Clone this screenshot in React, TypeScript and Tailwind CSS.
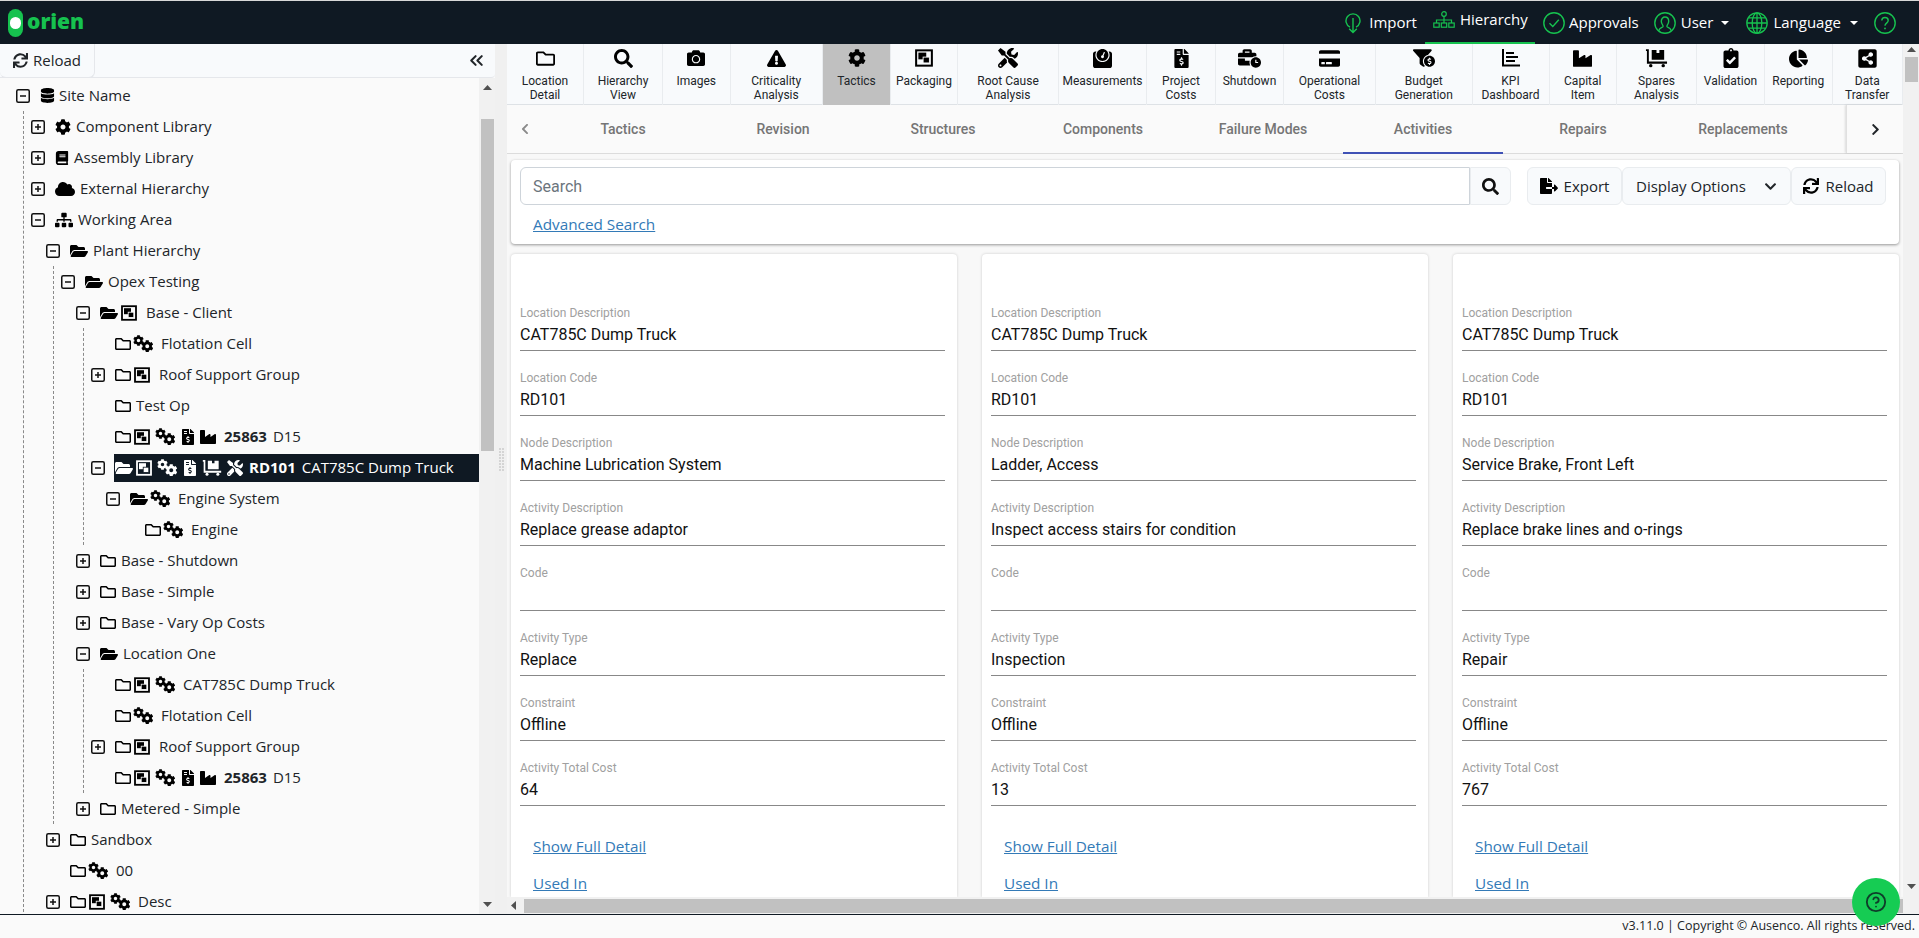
import React from "react";
import {
  FaDatabase, FaCog, FaBook, FaCloud, FaSitemap, FaRegFolder, FaFolderOpen, FaFileInvoiceDollar, FaIndustry, FaTools,
  FaSync, FaSearch, FaCamera, FaExclamationTriangle, FaWeight, FaBusinessTime, FaCreditCard,
  FaFunnelDollar, FaClipboardCheck, FaChartPie, FaShareAltSquare, FaFileExport, FaChevronDown, FaChevronLeft, FaChevronRight,
} from "react-icons/fa";
import { ChevronsLeft, CircleHelp } from "lucide-react";

const SANS = "font-['Open_Sans','Noto_Sans',sans-serif]";
const ROBOTO = "font-['Roboto',sans-serif]";

function ImgIcon({ size = 16, bg = "#fafafa" }: { size?: number; bg?: string }) {
  return (
    <svg width={size} height={size} viewBox="0 0 16 16" className="shrink-0">
      <rect x="1" y="1.2" width="14" height="13.6" fill="none" stroke="currentColor" strokeWidth="1.8" />
      <rect x="3" y="3.2" width="7" height="6" fill="currentColor" />
      <rect x="7.2" y="7.2" width="5.6" height="5.2" fill="currentColor" stroke={bg} strokeWidth="0.8" />
    </svg>
  );
}

function Cogs() {
  return (
    <span className="relative block w-[20px] h-[15px] -ml-px shrink-0">
      <FaCog size={11} className="absolute left-0 -top-px" />
      <FaCog size={12.5} className="absolute left-[7.5px] top-[3.5px]" />
    </span>
  );
}

function Cart({ size = 20 }: { size?: number }) {
  return (
    <svg width={size} height={size * 0.85} viewBox="0 0 24 20" className="shrink-0" fill="currentColor">
      <path d="M1 1h3v13h19v2.2H2V3H1z" />
      <path d="M7 2h5v3h3V2h5v10H7z" />
      <circle cx="6" cy="18.2" r="1.8" />
      <circle cx="19" cy="18.2" r="1.8" />
    </svg>
  );
}

const ICONS: Record<string, { el: (bg: string) => React.ReactNode; gap: string; end: string }> = {
  db: { el: () => <FaDatabase size={15} />, gap: "", end: "mr-[4px]" },
  cog: { el: () => <FaCog size={16} />, gap: "", end: "mr-[5px]" },
  book: { el: () => <FaBook size={14} />, gap: "", end: "mr-[5px]" },
  cloud: { el: () => <FaCloud size={20} />, gap: "", end: "mr-[5px]" },
  site: { el: () => <FaSitemap size={18} />, gap: "", end: "mr-[5px]" },
  F: { el: () => <FaRegFolder size={16} />, gap: "mr-[3px]", end: "mr-[5px]" },
  O: { el: () => <FaFolderOpen size={18} />, gap: "mr-[3px]", end: "mr-[5px]" },
  I: { el: (bg) => <ImgIcon bg={bg} />, gap: "mr-[6px]", end: "mr-[9px]" },
  C: { el: () => <Cogs />, gap: "mr-[5px]", end: "mr-[8px]" },
  D: { el: () => <FaFileInvoiceDollar size={16} />, gap: "mr-[4px]", end: "mr-[8px]" },
  M: { el: () => <FaIndustry size={16} />, gap: "mr-[5px]", end: "mr-[8px]" },
  K: { el: () => <Cart />, gap: "mr-[5px]", end: "mr-[8px]" },
  T: { el: () => <FaTools size={16} />, gap: "mr-[5px]", end: "mr-[6px]" },
};

type Node = {
  label: string;
  bold?: string;
  icons: string[];
  exp?: "plus" | "minus";
  line?: boolean;
  selected?: boolean;
  kids?: Node[];
};

const tree: Node = {
  label: "Site Name", icons: ["db"], exp: "minus", line: true, kids: [
    { label: "Component Library", icons: ["cog"], exp: "plus" },
    { label: "Assembly Library", icons: ["book"], exp: "plus" },
    { label: "External Hierarchy", icons: ["cloud"], exp: "plus" },
    {
      label: "Working Area", icons: ["site"], exp: "minus", kids: [
        {
          label: "Plant Hierarchy", icons: ["O"], exp: "minus", line: true, kids: [
            {
              label: "Opex Testing", icons: ["O"], exp: "minus", kids: [
                {
                  label: "Base - Client", icons: ["O", "I"], exp: "minus", line: true, kids: [
                    { label: "Flotation Cell", icons: ["F", "C"] },
                    { label: "Roof Support Group", icons: ["F", "I"], exp: "plus" },
                    { label: "Test Op", icons: ["F"] },
                    { label: "D15", bold: "25863", icons: ["F", "I", "C", "D", "M"] },
                    {
                      label: "CAT785C Dump Truck", bold: "RD101", selected: true, icons: ["O", "I", "C", "D", "K", "T"], exp: "minus", kids: [
                        {
                          label: "Engine System", icons: ["O", "C"], exp: "minus", kids: [
                            { label: "Engine", icons: ["F", "C"] },
                          ],
                        },
                      ],
                    },
                  ],
                },
                { label: "Base - Shutdown", icons: ["F"], exp: "plus" },
                { label: "Base - Simple", icons: ["F"], exp: "plus" },
                { label: "Base - Vary Op Costs", icons: ["F"], exp: "plus" },
                {
                  label: "Location One", icons: ["O"], exp: "minus", line: true, kids: [
                    { label: "CAT785C Dump Truck", icons: ["F", "I", "C"] },
                    { label: "Flotation Cell", icons: ["F", "C"] },
                    { label: "Roof Support Group", icons: ["F", "I"], exp: "plus" },
                    { label: "D15", bold: "25863", icons: ["F", "I", "C", "D", "M"] },
                  ],
                },
                { label: "Metered - Simple", icons: ["F"], exp: "plus" },
              ],
            },
          ],
        },
        { label: "Sandbox", icons: ["F"], exp: "plus" },
        { label: "00", icons: ["F", "C"] },
        { label: "Desc", icons: ["F", "I", "C"], exp: "plus" },
      ],
    },
  ],
};

function Expander({ kind }: { kind?: "plus" | "minus" }) {
  return (
    <span className="block w-[14px] h-[14px] shrink-0">
      {kind && (
        <svg width="14" height="14" viewBox="0 0 14 14" className="block">
          <rect x="0.75" y="0.75" width="12.5" height="12.5" rx="1.5" fill="none" stroke="#111" strokeWidth="1.5" />
          <path d="M4 7h6" stroke="#111" strokeWidth="1.5" />
          {kind === "plus" && <path d="M7 4v6" stroke="#111" strokeWidth="1.5" />}
        </svg>
      )}
    </span>
  );
}

function TreeRow({ n }: { n: Node }) {
  const bg = n.selected ? "#0f1923" : "#fafafa";
  return (
    <li>
      <div className="flex items-center h-[31px]">
        <Expander kind={n.exp} />
        <div className={`ml-[9px] pl-px flex-1 h-[28px] flex items-center whitespace-nowrap ${n.selected ? "bg-[#0f1923] text-white" : "text-[#212529]"}`}>
          {n.icons.map((k, i) => (
            <span key={i} className={`flex items-center ${i === n.icons.length - 1 ? ICONS[k].end : ICONS[k].gap} ${n.selected ? "text-white" : "text-black"}`}>
              {ICONS[k].el(bg)}
            </span>
          ))}
          {n.bold && <b className="font-bold mr-[6px]">{n.bold}</b>}
          <span>{n.label}</span>
        </div>
      </div>
      {n.kids && (
        <ul className={n.line ? "ml-[7px] pl-[7px] border-l border-dashed border-[#8a8a8a]" : "pl-[15px]"}>
          {n.kids.map((k, i) => <TreeRow key={i} n={k} />)}
        </ul>
      )}
    </li>
  );
}

function Arrow({ dir, className = "" }: { dir: "up" | "down" | "left"; className?: string }) {
  const d = dir === "up" ? "M0 5L4.5 0L9 5z" : dir === "down" ? "M0 0L4.5 5L9 0z" : "M5 0V9L0 4.5z";
  const w = dir === "left" ? 5 : 9;
  const h = dir === "left" ? 9 : 5;
  return (
    <svg width={w} height={h} viewBox={`0 0 ${w} ${h}`} className={className}>
      <path d={d} fill="#505050" />
    </svg>
  );
}

const green = "#16c24f";

function ImportIcon() {
  return (
    <svg width="16" height="22" viewBox="0 0 16 22" fill="none" stroke={green} strokeWidth="1.4" className="shrink-0">
      <path d="M5 15.2A7 7 0 1 1 11 15.2" />
      <path d="M8 6V20.5M4.2 16.8L8 20.6L11.8 16.8" />
    </svg>
  );
}
function HierIcon() {
  return (
    <svg width="22" height="17" viewBox="0 0 22 17" fill="none" stroke={green} strokeWidth="1.2" className="shrink-0">
      <circle cx="11" cy="3" r="2.3" />
      <path d="M11 5.3V9M3.5 12V9H18.5V12M11 9V12" />
      <rect x="0.8" y="12" width="5.4" height="4.2" />
      <rect x="8.3" y="12" width="5.4" height="4.2" />
      <rect x="15.8" y="12" width="5.4" height="4.2" />
    </svg>
  );
}
function CheckIcon() {
  return (
    <svg width="22" height="22" viewBox="0 0 22 22" fill="none" stroke={green} strokeWidth="1.4" className="shrink-0">
      <circle cx="11" cy="11" r="10.2" />
      <path d="M6.5 11.2L9.8 14.5L15.8 7.8" />
    </svg>
  );
}
function UserIcon() {
  return (
    <svg width="22" height="22" viewBox="0 0 22 22" fill="none" stroke={green} strokeWidth="1.4" className="shrink-0">
      <circle cx="11" cy="11" r="10.2" />
      <path d="M4.8 18.6c.5-2.6 2.4-2.6 3.9-3.6.6-.5.4-1.3 0-1.9-.9-1.1-1.4-2.4-1.4-3.8C7.3 6.7 8.9 5 11 5s3.7 1.7 3.7 4.3c0 1.4-.5 2.7-1.4 3.8-.4.6-.6 1.4 0 1.9 1.5 1 3.4 1 3.9 3.6" />
    </svg>
  );
}
function GlobeIcon() {
  return (
    <svg width="22" height="22" viewBox="0 0 22 22" fill="none" stroke={green} strokeWidth="1.3" className="shrink-0">
      <circle cx="11" cy="11" r="10.2" />
      <ellipse cx="11" cy="11" rx="4.8" ry="10.2" />
      <path d="M11 .8V21.2M1 11H21M2.6 5.8H19.4M2.6 16.2H19.4" />
    </svg>
  );
}
function HelpIcon() {
  return (
    <svg width="22" height="22" viewBox="0 0 22 22" fill="none" stroke={green} strokeWidth="1.4" className="shrink-0">
      <circle cx="11" cy="11" r="10.2" />
      <path d="M7.8 8.6C7.8 6.7 9.2 5.5 11 5.5s3.2 1.2 3.2 3c0 2.6-3.2 2.6-3.2 5.2" />
      <circle cx="11" cy="16.4" r="0.9" fill={green} stroke="none" />
    </svg>
  );
}
function Caret() {
  return <svg width="8" height="4" viewBox="0 0 8 4" className="shrink-0"><path d="M0 0h8L4 4z" fill="#fff" /></svg>;
}

function KpiIcon() {
  return (
    <svg width="18" height="18" viewBox="0 0 18 18" fill="currentColor">
      <path d="M0 0h2v15.5h16v2H0z" />
      <path d="M4 3h8v2H4zM4 7h12v2H4zM4 11h9v2H4z" />
    </svg>
  );
}

const tools: { w: string; icon: React.ReactNode; lines: string[]; active?: boolean }[] = [
  { w: "w-[77px]", icon: <FaRegFolder size={19} />, lines: ["Location", "Detail"] },
  { w: "w-[79px]", icon: <FaSearch size={19} />, lines: ["Hierarchy", "View"] },
  { w: "w-[67.5px]", icon: <FaCamera size={18} />, lines: ["Images"] },
  { w: "w-[92.5px]", icon: <FaExclamationTriangle size={19} />, lines: ["Criticality", "Analysis"] },
  { w: "w-[68px]", icon: <FaCog size={18} />, lines: ["Tactics"], active: true },
  { w: "w-[67px]", icon: <ImgIcon size={18} bg="#f8fafc" />, lines: ["Packaging"] },
  { w: "w-[101px]", icon: <FaTools size={20} />, lines: ["Root Cause", "Analysis"] },
  { w: "w-[88px]", icon: <FaWeight size={19} />, lines: ["Measurements"] },
  { w: "w-[69px]", icon: <FaFileInvoiceDollar size={19} />, lines: ["Project", "Costs"] },
  { w: "w-[68px]", icon: <FaBusinessTime size={23} />, lines: ["Shutdown"] },
  { w: "w-[92px]", icon: <FaCreditCard size={21} />, lines: ["Operational", "Costs"] },
  { w: "w-[96.5px]", icon: <FaFunnelDollar size={22} />, lines: ["Budget", "Generation"] },
  { w: "w-[77px]", icon: <KpiIcon />, lines: ["KPI", "Dashboard"] },
  { w: "w-[67.5px]", icon: <FaIndustry size={19} />, lines: ["Capital", "Item"] },
  { w: "w-[80px]", icon: <Cart size={23} />, lines: ["Spares", "Analysis"] },
  { w: "w-[68px]", icon: <FaClipboardCheck size={20} />, lines: ["Validation"] },
  { w: "w-[67.5px]", icon: <FaChartPie size={19} />, lines: ["Reporting"] },
  { w: "w-[70.5px]", icon: <FaShareAltSquare size={21} />, lines: ["Data", "Transfer"] },
];

const tabs = ["Tactics", "Revision", "Structures", "Components", "Failure Modes", "Activities", "Repairs", "Replacements"];

const LABELS = ["Location Description", "Location Code", "Node Description", "Activity Description", "Code", "Activity Type", "Constraint", "Activity Total Cost"];
const cards = [
  ["CAT785C Dump Truck", "RD101", "Machine Lubrication System", "Replace grease adaptor", "", "Replace", "Offline", "64"],
  ["CAT785C Dump Truck", "RD101", "Ladder, Access", "Inspect access stairs for condition", "", "Inspection", "Offline", "13"],
  ["CAT785C Dump Truck", "RD101", "Service Brake, Front Left", "Replace brake lines and o-rings", "", "Repair", "Offline", "767"],
];

export default function App() {
  return (
    <div className={`w-[1919px] h-[938px] overflow-hidden relative flex flex-col bg-[#fafafa] ${SANS} text-[15px] text-[#212529]`}>
      {/* header */}
      <header className="h-[44px] shrink-0 bg-[#0f1923] border-t border-[#d8d8d8] flex items-stretch text-white">
        <div className="flex items-center pl-[8px]">
          <span className="w-[15px] h-[28px] rounded-[7.5px] bg-[#16c24f] flex items-center justify-center">
            <span className="w-[11px] h-[12px] rounded-full bg-white" />
          </span>
          <span className="ml-[4px] text-[21px] font-extrabold leading-none text-[#16c24f] mb-[3px]">orien</span>
        </div>
        <nav className="ml-auto flex items-stretch pr-[23px]">
          <div className="flex items-center gap-[8px] mr-[8px]"><ImportIcon /><span>Import</span></div>
          <div className="w-[110px] flex items-center pl-[8px] gap-[5px] border-b-[3px] border-[#16c24f] pb-[4px] -mb-px"><HierIcon /><span>Hierarchy</span></div>
          <div className="flex items-center gap-[4px] ml-[8px]"><CheckIcon /><span>Approvals</span></div>
          <div className="flex items-center gap-[5px] ml-[15px]"><UserIcon /><span>User</span><span className="ml-[3px]"><Caret /></span></div>
          <div className="flex items-center gap-[5px] ml-[17px]">
            <GlobeIcon />
            <span>Language</span><span className="ml-[4px]"><Caret /></span>
          </div>
          <div className="flex items-center ml-[16px]"><HelpIcon /></div>
        </nav>
      </header>

      <div className="flex flex-1 min-h-0">
        {/* left */}
        <aside className="w-[495px] shrink-0 flex flex-col bg-[#fafafa]">
          <div className="h-[34px] shrink-0 flex items-stretch bg-[#f8fafc] border-b border-[#e5e7eb] rounded-br-[4px]">
            <div className="w-[95px] flex items-center gap-[5px] pl-[13px] border-r border-b border-[#e5e7eb] rounded-b-[6px] -mb-px">
              <FaSync size={15} className="text-[#212529]" /><span>Reload</span>
            </div>
            <div className="ml-auto pr-[8px] flex items-center"><ChevronsLeft size={21} strokeWidth={2.4} className="text-[#212529]" /></div>
          </div>
          <div className="flex-1 min-h-0 flex">
            <div className="flex-1 min-w-0 overflow-hidden pt-[2px] pl-[16px]">
              <ul><TreeRow n={tree} /></ul>
            </div>
            <div className="w-[16px] shrink-0 bg-[#f1f1f1] flex flex-col items-center relative">
              <div className="h-[41px] shrink-0 pt-[7px]"><Arrow dir="up" /></div>
              <div className="w-[13px] h-[332px] bg-[#c1c1c1] ml-[1px]" />
              <Arrow dir="down" className="mt-auto mb-[7px]" />
            </div>
          </div>
        </aside>

        {/* splitter */}
        <div className="w-[12px] shrink-0 bg-[#f0f0f0] flex items-center justify-center">
          <div className="grid grid-cols-2 gap-[1px] mb-[38px] translate-y-[-1px]">
            {Array.from({ length: 16 }).map((_, i) => <span key={i} className="w-[2px] h-[2px] bg-[#d4d4d4]" />)}
          </div>
        </div>

        {/* main */}
        <main className="flex-1 min-w-0 flex">
          <div className="w-[1396px] shrink-0 flex flex-col bg-[#f8f8f8]">
            <div className={`h-[61px] shrink-0 flex bg-[#f8fafc] border-b border-[#dee2e6] ${ROBOTO} text-[12px] leading-[14px] text-[#212529]`}>
              {tools.map((t) => (
                <div key={t.lines[0]} className={`${t.w} shrink-0 -mb-px flex flex-col items-center pt-[4px] border-r border-[#e9ecef] ${t.active ? "bg-[#c0c0c0]" : ""}`}>
                  <div className="h-[20px] flex items-center justify-center text-black">{t.icon}</div>
                  <div className="mt-[6px] text-center">
                    {t.lines.map((l) => <div key={l}>{l}</div>)}
                  </div>
                </div>
              ))}
            </div>

            <div className={`h-[49px] shrink-0 flex bg-[#fafafa] border-b border-[#dcdcdc] ${ROBOTO} text-[14px] font-medium text-[#757575]`}>
              <div className="w-[36px] flex items-center justify-center"><FaChevronLeft size={12} className="text-[#8a8a8a]" /></div>
              {tabs.map((t) => (
                <div key={t} className={`w-[160px] flex items-center justify-center ${t === "Activities" ? "border-b-2 border-[#3f51b5] -mb-px pt-[1px]" : ""}`}>{t}</div>
              ))}
              <div className="ml-[23px] flex-1 flex items-center justify-center border-l border-[#e0e0e0] shadow-[-1px_0_2px_rgba(0,0,0,0.12)]"><FaChevronRight size={13} className="text-[#212529]" /></div>
            </div>

            <div className="flex-1 min-h-0 flex flex-col pl-[4px] pr-[4px] overflow-hidden bg-[#f8f8f8]">
              <div className="h-[84px] shrink-0 mt-[6px] bg-white rounded-[4px] shadow-[0_1px_3px_rgba(0,0,0,0.4)] pl-[9px] pr-[13px] pt-[7px]">
                <div className="flex h-[38px]">
                  <div className={`w-[950px] border border-[#ced4da] rounded-l-[6px] flex items-center pl-[12px] pt-[1px] ${ROBOTO} text-[16px] text-[#6c757d]`}>Search</div>
                  <div className="w-[41px] bg-[#f8fafc] border border-[#e9ecef] rounded-r-[6px] flex items-center justify-center"><FaSearch size={17} className="text-[#111]" /></div>
                  <div className="w-[95px] ml-[16px] bg-[#f8fafc] border border-[#e9ecef] rounded-[6px] flex items-center justify-center gap-[6px]"><FaFileExport size={18} className="text-black" /><span>Export</span></div>
                  <div className="w-[169px] bg-[#f8fafc] border border-[#e9ecef] rounded-[6px] flex items-center pl-[13px]"><span>Display Options</span><FaChevronDown size={13} className="ml-[18px]" /></div>
                  <div className="w-[95px] bg-[#f8fafc] border border-[#e9ecef] rounded-[6px] flex items-center justify-center gap-[6px]"><FaSync size={16} className="text-black" /><span>Reload</span></div>
                </div>
                <a className="block mt-[7px] ml-[13px] text-[#337ab7] underline leading-[24px] text-[15.3px]">Advanced Search</a>
              </div>

              <div className="flex gap-[25px] mt-[10px] flex-1 min-h-0">
                {cards.map((vals, c) => (
                  <div key={c} className={`w-[446px] shrink-0 bg-white rounded-t-[4px] shadow-[0_0_3px_rgba(0,0,0,0.18)] pt-[52px] pl-[9px] pr-[12px] ${ROBOTO}`}>
                    {LABELS.map((l, i) => (
                      <div key={l} className="mb-[20px]">
                        <div className="text-[12px] leading-[14px] text-[#a0a0a0]">{l}</div>
                        <div className="h-[24px] mt-[3px] mb-[3px] text-[16px] leading-[24px] text-[#111]">{vals[i]}</div>
                        <div className="h-px bg-[#888]" />
                      </div>
                    ))}
                    <a className={`block mt-[28px] ml-[13px] leading-[24px] underline text-[#337ab7] ${SANS} text-[15.3px]`}>Show Full Detail</a>
                    <a className={`block mt-[13px] ml-[13px] leading-[24px] underline text-[#337ab7] ${SANS} text-[15.3px]`}>Used In</a>
                  </div>
                ))}
              </div>
            </div>

            <div className="h-[17px] shrink-0 bg-[#f1f1f1] flex items-center pl-[4px]">
              <Arrow dir="left" />
              <div className="ml-[8px] flex-1 h-[14px] bg-[#c1c1c1]" />
            </div>
          </div>

          {/* right scrollbar */}
          <div className="w-[16px] shrink-0 bg-[#f1f1f1] flex flex-col items-center">
            <div className="h-[13px] shrink-0 pt-[3px]"><Arrow dir="up" /></div>
            <div className="w-[13px] h-[25px] bg-[#c1c1c1] ml-[1px]" />
            <Arrow dir="down" className="mt-auto mb-[25px]" />
          </div>
        </main>
      </div>

      {/* footer */}
      <footer className="h-[24px] shrink-0 border-t border-[#0f1923] bg-[#fafafa] flex items-center justify-end pr-[4px] text-[12.5px] text-[#212529]">
        v3.11.0 | Copyright © Ausenco. All rights reserved.
      </footer>

      {/* floating help */}
      <div className="absolute left-[1852px] top-[878px] w-[48px] h-[48px] rounded-full bg-[#16cc53] flex items-center justify-center">
        <CircleHelp size={22} strokeWidth={2} color="#0f3d2a" />
      </div>
    </div>
  );
}
